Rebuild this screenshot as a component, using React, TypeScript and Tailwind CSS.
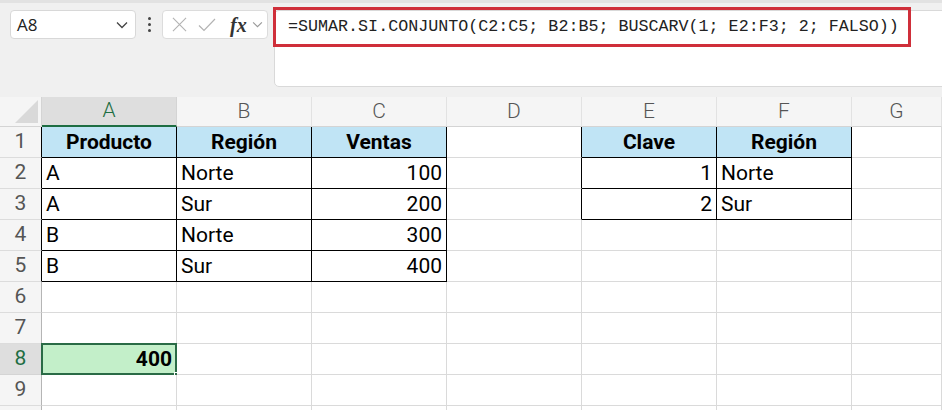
import React from "react"

const COLS = ["A", "B", "C", "D", "E", "F", "G"]
const COL_W = [135, 135, 135, 135, 135, 135, 90]

type Cell = { v: string; bold?: boolean; align?: "l" | "r" | "c"; head?: boolean }

const DATA: Record<string, Cell> = {
  A1: { v: "Producto", bold: true, align: "c", head: true },
  B1: { v: "Región", bold: true, align: "c", head: true },
  C1: { v: "Ventas", bold: true, align: "c", head: true },
  E1: { v: "Clave", bold: true, align: "c", head: true },
  F1: { v: "Región", bold: true, align: "c", head: true },
  A2: { v: "A" }, B2: { v: "Norte" }, C2: { v: "100", align: "r" },
  A3: { v: "A" }, B3: { v: "Sur" }, C3: { v: "200", align: "r" },
  A4: { v: "B" }, B4: { v: "Norte" }, C4: { v: "300", align: "r" },
  A5: { v: "B" }, B5: { v: "Sur" }, C5: { v: "400", align: "r" },
  E2: { v: "1", align: "r" }, F2: { v: "Norte" },
  E3: { v: "2", align: "r" }, F3: { v: "Sur" },
  A8: { v: "400", bold: true, align: "r" },
}

// bordered table ranges: A1:C5 and E1:F3
function inTable(r: number, c: number) {
  if (r >= 1 && r <= 5 && c >= 0 && c <= 2) return true
  if (r >= 1 && r <= 3 && c >= 4 && c <= 5) return true
  return false
}

const ROWS = [1, 2, 3, 4, 5, 6, 7, 8, 9, 10]

function Chevron({ className }: { className?: string }) {
  return (
    <svg viewBox="0 0 12 8" className={className} fill="none" stroke="currentColor" strokeWidth={1.3}>
      <path d="M1 1.5 L6 6.5 L11 1.5" />
    </svg>
  )
}

function Toolbar() {
  return (
    <div className="relative h-[97px] bg-[#f0f0f0]">
      <div className="h-[3px] bg-[#e2e2e2]" />
      <div className="flex items-start pl-[10px] pt-[7px]">
        <div className="flex h-[29px] w-[126px] items-center justify-between rounded-[4px] border border-[#d8d8d8] bg-white pl-[6px] pr-[7px]">
          <span className="text-[17px] text-[#222]" style={{ fontFamily: "'Open Sans', sans-serif" }}>A8</span>
          <Chevron className="h-[8px] w-[12px] text-[#444]" />
        </div>
        <div className="flex h-[29px] w-[26px] flex-col items-center justify-center gap-[3px]">
          <span className="h-[3px] w-[3px] rounded-full bg-[#444]" />
          <span className="h-[3px] w-[3px] rounded-full bg-[#444]" />
          <span className="h-[3px] w-[3px] rounded-full bg-[#444]" />
        </div>
        <div className="flex h-[29px] w-[106px] items-center rounded-[4px] border border-[#dcdcdc] bg-white pl-[9px]">
          <svg viewBox="0 0 16 16" className="h-[15px] w-[15px] text-[#b3b3b3]" fill="none" stroke="currentColor" strokeWidth={1.2}>
            <path d="M1 1 L15 15 M15 1 L1 15" />
          </svg>
          <svg viewBox="0 0 18 14" className="ml-[11px] h-[14px] w-[18px] text-[#b3b3b3]" fill="none" stroke="currentColor" strokeWidth={1.2}>
            <path d="M1 7.5 L6 12.5 L17 1" />
          </svg>
          <span
            className="ml-[14px] text-[20px] font-semibold italic text-[#333]"
            style={{ fontFamily: "'Liberation Serif', serif" }}
          >
            fx
          </span>
          <Chevron className="ml-[5px] h-[7px] w-[11px] text-[#999]" />
        </div>
        <div className="ml-[6px] -mr-[10px] h-[77px] flex-1 rounded-[5px] border border-[#d9d9d9] bg-white pl-[13px] pt-[3px]">
          <span className="text-[16.7px] text-[#222]" style={{ fontFamily: "'Liberation Mono', monospace" }}>
            =SUMAR.SI.CONJUNTO(C2:C5; B2:B5; BUSCARV(1; E2:F3; 2; FALSO))
          </span>
        </div>
      </div>
      {/* highlight annotation */}
      <div className="pointer-events-none absolute left-[273px] top-[7px] h-[40px] w-[638px] border-[3px] border-[#cf2f3a]" />
    </div>
  )
}

function HeaderRow() {
  return (
    <div className="flex h-[30px]">
      <div className="relative w-[42px] shrink-0 border-r border-b border-[#d4d4d4] bg-[#f5f5f5]">
        <svg viewBox="0 0 10 10" className="absolute bottom-[3px] right-[3px] h-[23px] w-[23px]" preserveAspectRatio="none">
          <path d="M10 0 L10 10 L0 10 Z" fill="#d9d9d9" />
        </svg>
      </div>
      {COLS.map((c, i) => {
        const sel = c === "A"
        return (
          <div
            key={c}
            style={{ width: COL_W[i] }}
            className={
              "flex shrink-0 items-center justify-center text-[21px] font-light " +
              (sel
                ? "border-b-2 border-r border-r-[#d4d4d4] border-b-[#1e6e43] bg-[#dedede] text-[#1e6e43]"
                : "border-r border-b border-r-[#e2e2e2] border-b-[#d4d4d4] bg-[#f5f5f5] text-[#555]")
            }
          >
            {c}
          </div>
        )
      })}
    </div>
  )
}

function Row({ r }: { r: number }) {
  const selRow = r === 8
  return (
    <div className="flex h-[31px]">
      <div
        className={
          "flex w-[42px] shrink-0 items-center justify-center border-b border-r text-[21px] " +
          (selRow
            ? "border-b-[#d4d4d4] border-r-[#1e6e43] bg-[#dedede] text-[#1e6e43]"
            : "border-b-[#dcdcdc] bg-[#f5f5f5] text-[#555] " + (inTable(r, 0) ? "border-r-black" : "border-r-[#b5b5b5]"))
        }
      >
        {r < 10 ? r : ""}
      </div>
      {COLS.map((c, i) => {
        const key = c + r
        const cell = DATA[key]
        const rb = inTable(r, i) || inTable(r, i + 1)
        const bb = inTable(r, i) || inTable(r + 1, i)
        const sel = key === "A8"
        const align = cell?.align === "r" ? "justify-end" : cell?.align === "c" ? "justify-center" : "justify-start"
        return (
          <div
            key={key}
            style={{ width: COL_W[i] }}
            className={
              "relative flex shrink-0 items-center border-r border-b px-[4px] pt-[1px] text-[21px] text-black " +
              align +
              " " +
              (rb ? "border-r-black " : "border-r-[#dadada] ") +
              (bb ? "border-b-black " : "border-b-[#dadada] ") +
              (cell?.head ? "bg-[#c0e4f5] " : sel ? "bg-[#c3efc9] " : "bg-white ") +
              (cell?.bold ? "font-bold" : "")
            }
          >
            {cell?.v}
            {sel && (
              <>
                <div className="pointer-events-none absolute -left-[1px] -top-[1px] -right-[1px] -bottom-[1px] border-2 border-[#2a6b46]" />
                <div className="absolute -bottom-[4px] -right-[4px] h-[6px] w-[6px] border border-white bg-[#2a6b46]" />
              </>
            )}
          </div>
        )
      })}
    </div>
  )
}

export default function App() {
  return (
    <div className="h-[410px] w-[942px] overflow-hidden bg-white" style={{ fontFamily: "Roboto, 'Noto Sans', sans-serif" }}>
      <Toolbar />
      <HeaderRow />
      {ROWS.map((r) => (
        <Row key={r} r={r} />
      ))}
    </div>
  )
}
